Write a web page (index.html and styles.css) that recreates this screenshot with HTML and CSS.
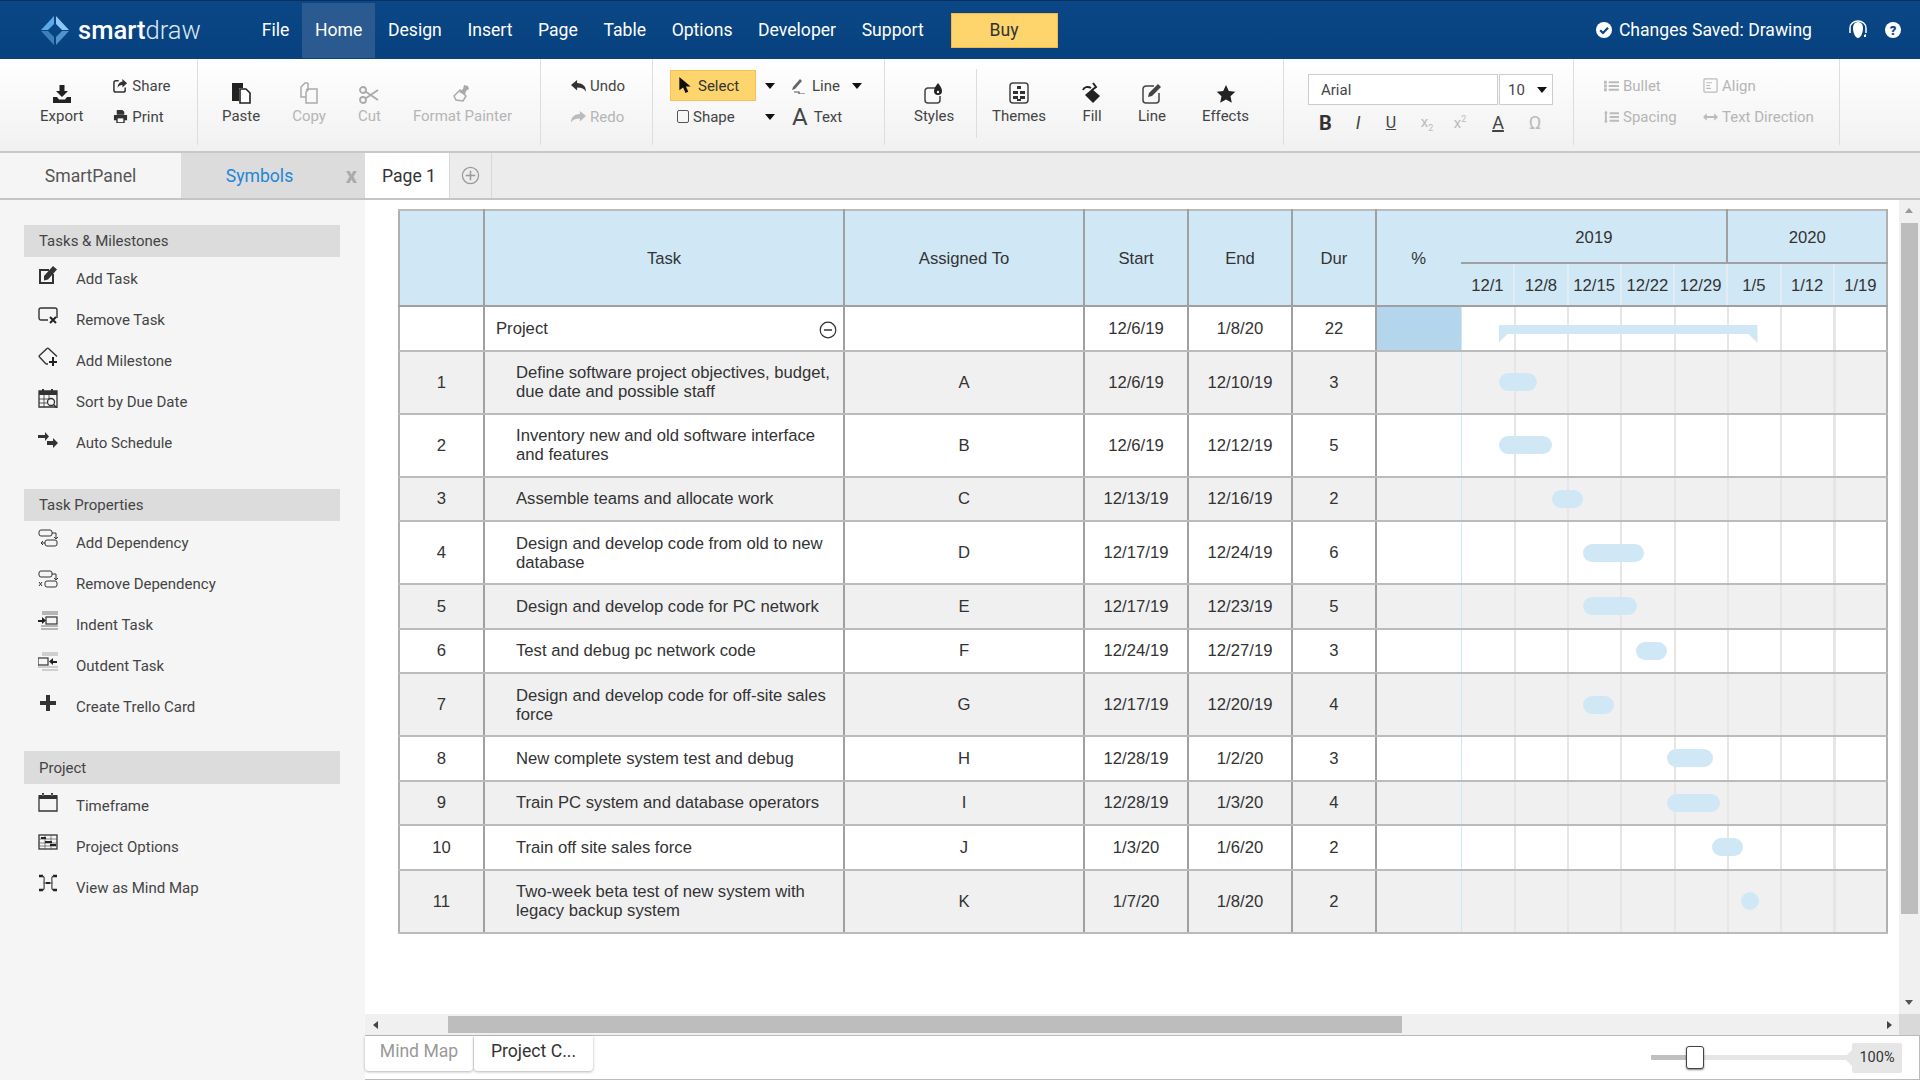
FILE: index.html
```html
<!DOCTYPE html>
<html lang="en">
<head>
  <meta charset="UTF-8">
  <title>SmartDraw - Project Chart</title>
  <link rel="stylesheet" href="styles.css">
</head>
<body>

  <!-- Top menu -->
  <div class="navbar">
    <div class="logo">
      <svg class="logo-mark" viewBox="0 0 28 29" width="28" height="29">
        <path fill="#5aa9ea" d="M0 14 13 0v8l-6 6z"/>
        <path fill="#8cc8f8" d="M28 14 15 0v8l6 6z"/>
        <path fill="#3f7fb8" d="M0 15l13 14v-8l-6-6z"/>
        <path fill="#4f93cc" d="M28 15 15 29v-8l6-6z"/>
      </svg>
      <span class="logo-text"><b>smart</b>draw</span>
    </div>
    <a class="nav-item">File</a>
    <a class="nav-item active">Home</a>
    <a class="nav-item">Design</a>
    <a class="nav-item">Insert</a>
    <a class="nav-item">Page</a>
    <a class="nav-item">Table</a>
    <a class="nav-item">Options</a>
    <a class="nav-item">Developer</a>
    <a class="nav-item">Support</a>
    <a class="buy-btn">Buy</a>
    <div class="nav-right">
      <svg viewBox="0 0 16 16" width="16" height="16"><circle cx="8" cy="8" r="8" fill="#fff"/><path d="M4.200 8.200 7 11l5-5.200" fill="none" stroke="#0a4585" stroke-width="2.200"/></svg>
      <span class="saved-text">Changes Saved: Drawing</span>
      <svg class="headset" viewBox="0 0 20 20" width="20" height="20"><path d="M5 8c0-4 2.500-6 5-6s5 2 5 6c0 5-2.500 10-5 10S5 13 5 8z" fill="#fff"/><path d="M2 13V8c0-4 3.500-7 8-7s8 3 8 7v5" fill="none" stroke="#fff" stroke-width="1.500"/><path d="M16 15l2-1v3h-2z" fill="#fff"/></svg>
      <span class="help">?</span>
    </div>
  </div>

  <!-- Ribbon -->
  <div class="toolbar">
    <div class="tool-group group-file">
      <div class="big-tool">
        <svg viewBox="0 0 20 20" width="20" height="20"><path d="M7.500 1h5v6h3.500L10 13 4 7h3.500z" fill="#222"/><path d="M1 13h4l2 2.500h6L15 13h4v6H1z" fill="#222"/></svg>
        <span>Export</span>
      </div>
      <div class="small-tools">
        <div class="small-tool">
          <svg viewBox="0 0 16 16" width="15" height="15"><path d="M6 3H3a2 2 0 0 0-2 2v8a2 2 0 0 0 2 2h8a2 2 0 0 0 2-2v-3" fill="none" stroke="#333" stroke-width="1.600"/><path d="M10 1l5 4.500-5 4.500V7.500C7.500 7.500 6 8.500 5 10.500c0-4 2-6.500 5-6.500z" fill="#333"/></svg>
          <span>Share</span>
        </div>
        <div class="small-tool">
          <svg viewBox="0 0 16 16" width="15" height="15"><path d="M4 1h6l2 2v3H4zM1 6.500h14V12h-2.500v3h-9v-3H1z" fill="#333"/><path d="M5 10h6v4H5z" fill="#f8f8f8"/></svg>
          <span>Print</span>
        </div>
      </div>
    </div>

    <div class="tool-group group-clipboard">
      <div class="big-tool">
        <svg viewBox="0 0 20 22" width="20" height="22"><path d="M1 1h11v5H8v13H1z" fill="#222"/><path d="M9 7h6l4 4v10H9z" fill="#fff" stroke="#222" stroke-width="1.600"/></svg>
        <span>Paste</span>
      </div>
      <div class="big-tool disabled">
        <svg viewBox="0 0 20 22" width="20" height="22"><path d="M9 1h-3L2 5v10h5" fill="none" stroke="#aaa" stroke-width="1.500"/><path d="M9 1v6L7 8M12 7h-2l-3 3v11h11V7z" fill="none" stroke="#aaa" stroke-width="1.500"/></svg>
        <span>Copy</span>
      </div>
      <div class="big-tool disabled">
        <svg viewBox="0 0 20 18" width="20" height="18"><circle cx="4" cy="4" r="3" fill="none" stroke="#aaa" stroke-width="1.800"/><circle cx="4" cy="14" r="3" fill="none" stroke="#aaa" stroke-width="1.800"/><path d="M6.500 5.500 19 14M6.500 12.500 19 4" stroke="#aaa" stroke-width="1.800"/></svg>
        <span>Cut</span>
      </div>
      <div class="big-tool disabled">
        <svg viewBox="0 0 20 20" width="20" height="20"><path d="M2 12l6-6 6 6-3 5-7-1z" fill="none" stroke="#aaa" stroke-width="1.500"/><path d="M7 8l4-3 1-4 4 1 1 3-3 2-1 4z" fill="#aaa"/></svg>
        <span>Format Painter</span>
      </div>
    </div>

    <div class="tool-group group-history">
      <div class="small-tools">
        <div class="small-tool">
          <svg viewBox="0 0 16 14" width="15" height="14"><path d="M0 6l6.500-5.500v3.300C11 4 16 6 16 13c-1.800-3-4.500-4.300-9.500-4.300v3z" fill="#333"/></svg>
          <span>Undo</span>
        </div>
        <div class="small-tool disabled">
          <svg viewBox="0 0 16 14" width="15" height="14"><path d="M16 6 9.500.5v3.300C5 4 0 6 0 13c1.800-3 4.500-4.300 9.500-4.300v3z" fill="#bbb"/></svg>
          <span>Redo</span>
        </div>
      </div>
    </div>

    <div class="tool-group group-draw">
      <div class="select-btn">
        <svg viewBox="0 0 14 18" width="14" height="17"><path d="M1 0v14l4-3 2.500 6 3-1.300L8 10h5z" fill="#111"/></svg>
        <span>Select</span>
      </div>
      <i class="caret"></i>
      <div class="small-tool draw-line">
        <svg viewBox="0 0 14 16" width="14" height="16"><path d="M1 9l7-8 2 2-7 8-3 1z" fill="#666"/><path d="M2 14h5v2h6" fill="none" stroke="#555" stroke-width="1.200"/></svg>
        <span>Line</span>
        <i class="caret"></i>
      </div>
      <div class="small-tool draw-shape">
        <i class="check-box"></i>
        <span>Shape</span>
      </div>
      <i class="caret"></i>
      <div class="small-tool draw-text">
        <span class="big-a">A</span>
        <span>Text</span>
      </div>
    </div>

    <div class="tool-group group-styles">
      <div class="big-tool">
        <svg viewBox="0 0 20 22" width="20" height="22"><path d="M12 6H4a3 3 0 0 0-3 3v9a3 3 0 0 0 3 3h9a3 3 0 0 0 3-3v-4" fill="none" stroke="#444" stroke-width="1.500"/><path d="M14 1c2 3 4 5 4 8a4 4 0 0 1-8 0c0-3 2-5 4-8z" fill="#222"/><circle cx="14" cy="10" r="1.200" fill="#fff"/></svg>
        <span>Styles</span>
      </div>
    </div>

    <div class="tool-group group-format">
      <div class="big-tool">
        <svg viewBox="0 0 20 22" width="20" height="22"><rect x="1" y="1" width="18" height="20" rx="3" fill="none" stroke="#444" stroke-width="1.500"/><path d="M8 4h4v3H8zM4 9h5v3H4zM11 9h5v3h-5zM4 14h5v3H4zM8 17h4v2H8zM11 14h5v3h-5z" fill="#333"/></svg>
        <span>Themes</span>
      </div>
      <div class="big-tool">
        <svg viewBox="0 0 20 22" width="20" height="22"><path d="M10 7l8 7-7 7-8-8z" fill="#222"/><path d="M1 8c1-3 5-4 8-2M11 1l3 4-4 3" fill="none" stroke="#222" stroke-width="2"/></svg>
        <span>Fill</span>
      </div>
      <div class="big-tool">
        <svg viewBox="0 0 20 22" width="20" height="22"><path d="M12 4H4a3 3 0 0 0-3 3v11a3 3 0 0 0 3 3h10a3 3 0 0 0 3-3v-7" fill="none" stroke="#444" stroke-width="1.500"/><path d="M7 11 16 2l3 3-9 9-4 1z" fill="#444"/></svg>
        <span>Line</span>
      </div>
      <div class="big-tool">
        <svg viewBox="0 0 20 20" width="20" height="20"><path d="M10 1l2.800 6 6.500.8-4.800 4.400 1.300 6.500L10 15.500l-5.800 3.200 1.300-6.500L.7 7.800l6.500-.8z" fill="#222"/></svg>
        <span>Effects</span>
      </div>
    </div>

    <div class="tool-group group-font">
      <div class="font-row">
        <div class="font-box">Arial</div>
        <div class="size-box">10<i class="caret"></i></div>
      </div>
      <div class="format-row">
        <span class="fmt-b">B</span>
        <span class="fmt-i">I</span>
        <span class="fmt-u">U</span>
        <span class="fmt-script">x<sub>2</sub></span>
        <span class="fmt-script">x<sup>2</sup></span>
        <span class="fmt-a">A</span>
        <span class="fmt-o">&#937;</span>
      </div>
    </div>

    <div class="tool-group group-para">
      <div class="small-tool disabled">
        <svg viewBox="0 0 16 14" width="15" height="14"><path d="M5 2h11v2H5zM5 6h11v2H5zM5 10h11v2H5z" fill="#bbb"/><path d="M0 1.500h3v3H0zM0 5.500h3v3H0zM0 9.500h3v3H0z" fill="#bbb"/></svg>
        <span>Bullet</span>
      </div>
      <div class="small-tool disabled">
        <svg viewBox="0 0 16 16" width="15" height="15"><rect x="1" y="1" width="14" height="14" rx="1" fill="none" stroke="#bbb" stroke-width="1.300"/><path d="M3.500 5h6M3.500 8h4M3.500 11h5" stroke="#bbb" stroke-width="1.200"/></svg>
        <span>Align</span>
      </div>
      <div class="small-tool disabled">
        <svg viewBox="0 0 16 14" width="15" height="14"><path d="M6 2h10v2H6zM6 6h10v2H6zM6 10h10v2H6z" fill="#bbb"/><path d="M2 0l2 3H3v8h1l-2 3-2-3h1V3H0z" fill="#bbb"/></svg>
        <span>Spacing</span>
      </div>
      <div class="small-tool disabled">
        <svg viewBox="0 0 16 10" width="15" height="10"><path d="M0 5l4-4v3h8V1l4 4-4 4V6H4v3z" fill="#bbb"/></svg>
        <span>Text Direction</span>
      </div>
    </div>
  </div>

  <!-- Panel tabs and page tabs -->
  <div class="tab-bar">
    <div class="panel-tab">SmartPanel</div>
    <div class="panel-tab selected">Symbols<span class="close-x">x</span></div>
    <div class="page-tab">Page 1</div>
    <div class="page-add">
      <svg viewBox="0 0 20 20" width="19" height="19"><circle cx="10" cy="10" r="8.500" fill="none" stroke="#999" stroke-width="1.300"/><path d="M10 5v10M5 10h10" stroke="#999" stroke-width="1.600"/></svg>
    </div>
  </div>

  <div class="workspace">
    <!-- SmartPanel -->
    <div class="panel">
      <div class="panel-title">Tasks &amp; Milestones</div>
      <ul class="panel-list">
        <li>
          <svg viewBox="0 0 20 20" width="20" height="20"><path d="M1 4h10v2H3v11h11V9h2v10H1z" fill="#333"/><path d="M6 11 15 1l4 3.500-9 10-4 1z" fill="#333"/></svg>
          Add Task
        </li>
        <li>
          <svg viewBox="0 0 20 20" width="20" height="20"><path d="M10 14H3a2 2 0 0 1-2-2V4a2 2 0 0 1 2-2h14a2 2 0 0 1 2 2v8" fill="none" stroke="#333" stroke-width="1.400"/><path d="M12 11l6 6M18 11l-6 6" stroke="#222" stroke-width="2"/></svg>
          Remove Task
        </li>
        <li>
          <svg viewBox="0 0 20 20" width="20" height="20"><path d="M8 17 1.500 10a1 1 0 0 1 0-1.500L9 1.500a1 1 0 0 1 1.500 0L19 9.500" fill="none" stroke="#333" stroke-width="1.400"/><path d="M8 17h2" stroke="#333" stroke-width="1.400"/><path d="M15 10v9M11 15h8" stroke="#222" stroke-width="2"/></svg>
          Add Milestone
        </li>
        <li>
          <svg viewBox="0 0 20 20" width="20" height="20"><path d="M1 3h18v16H1z" fill="none" stroke="#333" stroke-width="1.300"/><path d="M1 3h18v4H1z" fill="#333"/><path d="M5 1v3M14 1v3" stroke="#333" stroke-width="2"/><path d="M1 11h11M1 15h8M6 7v12M11 7v5" stroke="#333" stroke-width=".8"/><circle cx="13" cy="14" r="3.500" fill="#f5f5f5" stroke="#333" stroke-width="1.300"/><path d="M15.500 16.500 19 20" stroke="#333" stroke-width="1.500"/></svg>
          Sort by Due Date
        </li>
        <li>
          <svg viewBox="0 0 20 20" width="20" height="20"><path d="M0 6h7V3l4 4.500L7 12V9H0z" fill="#333"/><path d="M9 12h6V9l5 5-5 5v-3H9z" fill="#333"/></svg>
          Auto Schedule
        </li>
      </ul>

      <div class="panel-title">Task Properties</div>
      <ul class="panel-list">
        <li>
          <svg viewBox="0 0 20 20" width="20" height="20"><rect x="1" y="1" width="13" height="6" rx="2" fill="none" stroke="#333"/><rect x="7" y="11" width="12" height="6" rx="2" fill="none" stroke="#333"/><path d="M14 4h4v6M16 8l2 2 2-2M7 14H3M5 12l-2 2 2 2" fill="none" stroke="#333"/></svg>
          Add Dependency
        </li>
        <li>
          <svg viewBox="0 0 20 20" width="20" height="20"><rect x="1" y="1" width="13" height="6" rx="2" fill="none" stroke="#333"/><rect x="7" y="11" width="12" height="6" rx="2" fill="none" stroke="#333"/><path d="M14 4h4v6M16 8l2 2 2-2M4 12l-3 4M1 12l3 4" fill="none" stroke="#333"/></svg>
          Remove Dependency
        </li>
        <li>
          <svg viewBox="0 0 20 20" width="20" height="20"><path d="M4 1h16M4 3h16M3 15h17M3 18h17" stroke="#777" stroke-width="1.200"/><rect x="8" y="6" width="11" height="7" fill="none" stroke="#333" stroke-width="1.200"/><path d="M0 9h4V6l4 3.500L4 13v-2H0z" fill="#222"/></svg>
          Indent Task
        </li>
        <li>
          <svg viewBox="0 0 20 20" width="20" height="20"><path d="M4 1h16M4 3h16M0 15h20M4 18h16" stroke="#aaa" stroke-width="1.200"/><rect x="0" y="6" width="10" height="7" fill="none" stroke="#333" stroke-width="1.200"/><path d="M19 9h-4V6l-4 3.500 4 3.500v-2h4z" fill="#222"/></svg>
          Outdent Task
        </li>
        <li>
          <svg viewBox="0 0 20 20" width="20" height="20"><path d="M2 8h6V2h4v6h6v4h-6v6H8v-6H2z" fill="#333"/></svg>
          Create Trello Card
        </li>
      </ul>

      <div class="panel-title project">Project</div>
      <ul class="panel-list">
        <li>
          <svg viewBox="0 0 20 20" width="20" height="20"><path d="M1 4h18v15H1z" fill="none" stroke="#333" stroke-width="1.300"/><path d="M1 3h18v4H1z" fill="#333"/><path d="M5 1v4M14 1v4" stroke="#333" stroke-width="2"/><path d="M4.500 3h1M13.500 3h1" stroke="#f5f5f5"/></svg>
          Timeframe
        </li>
        <li>
          <svg viewBox="0 0 20 20" width="20" height="20"><rect x="1" y="2" width="18" height="14" fill="none" stroke="#333" stroke-width="1.300"/><path d="M1 6h18M1 10h18M1 13h18M7 2v14M13 2v14" stroke="#555" stroke-width=".7"/><path d="M3 4h5v2H3zM7 8h7v2H7zM12 11h6v2h-6z" fill="#222"/></svg>
          Project Options
        </li>
        <li>
          <svg viewBox="0 0 20 20" width="20" height="20"><path d="M1 2h4M1 16h4M15 2h4M15 16h4" stroke="#222" stroke-width="2.500"/><path d="M4 2c3 0 2 3 2 7s1 7-2 7M16 2c-3 0-2 3-2 7s-1 7 2 7M6 9h8" fill="none" stroke="#333" stroke-width="1.100"/><path d="M8 8h4v2H8z" fill="#222"/></svg>
          View as Mind Map
        </li>
      </ul>
    </div>

    <div class="stage">
      <div class="stage-top">
        <div class="canvas">
          <table class="gantt">
            <colgroup>
              <col class="col-num"><col class="col-task"><col class="col-who"><col class="col-date"><col class="col-date"><col class="col-dur"><col class="col-pct">
              <col class="col-week"><col class="col-week"><col class="col-week"><col class="col-week"><col class="col-week"><col class="col-week"><col class="col-week"><col class="col-week">
            </colgroup>
            <thead>
              <tr class="year-row">
                <th rowspan="2"></th>
                <th rowspan="2">Task</th>
                <th rowspan="2">Assigned To</th>
                <th rowspan="2">Start</th>
                <th rowspan="2">End</th>
                <th rowspan="2">Dur</th>
                <th rowspan="2" class="pct">%</th>
                <th colspan="5" class="year">2019</th>
                <th colspan="3" class="year-last">2020</th>
              </tr>
              <tr class="week-row">
                <th>12/1</th><th>12/8</th><th>12/15</th><th>12/22</th><th>12/29</th><th>1/5</th><th>1/12</th><th>1/19</th>
              </tr>
            </thead>
            <tbody>
              <tr class="single">
                <td></td><td class="task-head">Project
                  <svg class="collapse" viewBox="0 0 18 18" width="18" height="18"><circle cx="9" cy="9" r="7.800" fill="none" stroke="#333" stroke-width="1.200"/><path d="M5 9h8" stroke="#333" stroke-width="1.500"/></svg>
                </td><td></td><td>12/6/19</td><td>1/8/20</td><td>22</td><td class="pct pct-fill"></td>
                <td colspan="8" class="timeline"><div class="summary-bar"></div></td>
              </tr>
              <tr class="double alt">
                <td>1</td><td class="task">Define software project objectives, budget, due date and possible staff</td><td>A</td><td>12/6/19</td><td>12/10/19</td><td>3</td><td class="pct"></td>
                <td colspan="8" class="timeline"><div class="bar" style="left:38px;width:38px"></div></td>
              </tr>
              <tr class="double">
                <td>2</td><td class="task">Inventory new and old software interface and features</td><td>B</td><td>12/6/19</td><td>12/12/19</td><td>5</td><td class="pct"></td>
                <td colspan="8" class="timeline"><div class="bar" style="left:38px;width:53px"></div></td>
              </tr>
              <tr class="single alt">
                <td>3</td><td class="task">Assemble teams and allocate work</td><td>C</td><td>12/13/19</td><td>12/16/19</td><td>2</td><td class="pct"></td>
                <td colspan="8" class="timeline"><div class="bar" style="left:91px;width:31px"></div></td>
              </tr>
              <tr class="double">
                <td>4</td><td class="task">Design and develop code from old to new database</td><td>D</td><td>12/17/19</td><td>12/24/19</td><td>6</td><td class="pct"></td>
                <td colspan="8" class="timeline"><div class="bar" style="left:122px;width:61px"></div></td>
              </tr>
              <tr class="single alt">
                <td>5</td><td class="task">Design and develop code for PC network</td><td>E</td><td>12/17/19</td><td>12/23/19</td><td>5</td><td class="pct"></td>
                <td colspan="8" class="timeline"><div class="bar" style="left:122px;width:54px"></div></td>
              </tr>
              <tr class="single">
                <td>6</td><td class="task">Test and debug pc network code</td><td>F</td><td>12/24/19</td><td>12/27/19</td><td>3</td><td class="pct"></td>
                <td colspan="8" class="timeline"><div class="bar" style="left:175px;width:31px"></div></td>
              </tr>
              <tr class="double alt">
                <td>7</td><td class="task">Design and develop code for off-site sales force</td><td>G</td><td>12/17/19</td><td>12/20/19</td><td>4</td><td class="pct"></td>
                <td colspan="8" class="timeline"><div class="bar" style="left:122px;width:31px"></div></td>
              </tr>
              <tr class="single">
                <td>8</td><td class="task">New complete system test and debug</td><td>H</td><td>12/28/19</td><td>1/2/20</td><td>3</td><td class="pct"></td>
                <td colspan="8" class="timeline"><div class="bar" style="left:206px;width:46px"></div></td>
              </tr>
              <tr class="single alt">
                <td>9</td><td class="task">Train PC system and database operators</td><td>I</td><td>12/28/19</td><td>1/3/20</td><td>4</td><td class="pct"></td>
                <td colspan="8" class="timeline"><div class="bar" style="left:206px;width:53px"></div></td>
              </tr>
              <tr class="single">
                <td>10</td><td class="task">Train off site sales force</td><td>J</td><td>1/3/20</td><td>1/6/20</td><td>2</td><td class="pct"></td>
                <td colspan="8" class="timeline"><div class="bar" style="left:251px;width:31px"></div></td>
              </tr>
              <tr class="double alt">
                <td>11</td><td class="task">Two-week beta test of new system with legacy backup system</td><td>K</td><td>1/7/20</td><td>1/8/20</td><td>2</td><td class="pct"></td>
                <td colspan="8" class="timeline"><div class="bar" style="left:280px;width:18px"></div></td>
              </tr>
            </tbody>
          </table>
        </div>
        <div class="vscroll">
          <i class="arrow-up"></i>
          <div class="vthumb"></div>
          <i class="arrow-down"></i>
        </div>
      </div>

      <div class="hscroll">
        <div class="hstart"><i class="arrow-left"></i></div>
        <div class="hthumb"></div>
        <div class="hend"><i class="arrow-right"></i></div>
        <div class="corner"></div>
      </div>

      <div class="bottom-bar">
        <div class="sheet-tab muted">Mind Map</div>
        <div class="sheet-tab">Project C...</div>
        <div class="zoom-slider">
          <div class="slider-track"><div class="slider-fill"></div><div class="slider-thumb"></div></div>
          <div class="zoom-value">100%</div>
        </div>
      </div>
    </div>
  </div>

</body>
</html>
```

FILE: styles.css
```css
* {
  box-sizing: border-box;
}

body {
  margin: 0;
  height: 1080px;
  overflow: hidden;
  display: flex;
  flex-direction: column;
  font-family: Roboto, "Noto Sans", sans-serif;
  color: #333;
  background-color: #fff;
}

/* navbar */
.navbar {
  display: flex;
  align-items: center;
  height: 59px;
  flex: none;
  background: linear-gradient(#0b4786, #07417f);
  border-top: 1px solid #0a2f5c;
  color: #fff;
}

.logo {
  display: flex;
  align-items: center;
  width: 249px;
  padding-left: 41px;
}

.logo-text {
  margin-left: 9px;
  font-size: 25.6px;
  font-weight: 300;
  color: #dfe8f1;
}

.logo-text b {
  font-weight: 500;
  color: #fff;
}

.nav-item {
  display: flex;
  align-items: center;
  height: 55px;
  padding: 0 12.8px;
  font-size: 17.6px;
}

.nav-item.active {
  background-color: #2a5a90;
}

.buy-btn {
  display: flex;
  align-items: center;
  justify-content: center;
  width: 107px;
  height: 35px;
  margin-left: 14px;
  background-color: #fdd56c;
  border: 1px solid #f5b942;
  color: #333;
  font-size: 17.6px;
}

.nav-right {
  display: flex;
  align-items: center;
  margin-left: auto;
  padding-right: 19px;
}

.saved-text {
  margin-left: 7px;
  font-size: 17.6px;
}

.headset {
  margin-left: 36px;
}

.help {
  display: flex;
  align-items: center;
  justify-content: center;
  width: 16px;
  height: 16px;
  margin-left: 17px;
  border-radius: 50%;
  background-color: #fff;
  color: #0a4585;
  font-size: 13px;
  font-weight: 900;
}

/* ribbon */
.toolbar {
  display: flex;
  height: 94px;
  flex: none;
  background: linear-gradient(#fff, #f1f1f1);
  border-bottom: 2px solid #c8c8c8;
  font-size: 15px;
}

.tool-group {
  position: relative;
  display: flex;
  height: 86px;
  padding-top: 11px;
  border-right: 1px solid #ddd;
  color: #444;
}

.group-file { width: 198px; padding-left: 40px; gap: 30px; }
.group-clipboard { width: 343px; padding-left: 24px; gap: 32px; }
.group-history { width: 112px; padding-left: 30px; }
.group-draw {
  display: grid;
  grid-template-columns: 86px 36px 85px;
  grid-template-rows: 31px 31px;
  justify-items: start;
  align-items: center;
  width: 232px;
  padding-left: 17px;
}
.group-styles { width: 91px; padding-left: 29px; border-right: none; }
.group-format { width: 308px; padding-left: 16px; gap: 36px; }
.group-format::before {
  content: "";
  position: absolute;
  left: 0;
  top: 10px;
  bottom: 7px;
  width: 1px;
  background-color: #ddd;
}
.group-font { display: block; width: 290px; padding: 15px 0 0 24px; }
.group-para {
  display: grid;
  grid-template-columns: 99px auto;
  grid-template-rows: 31px 31px;
  align-items: center;
  justify-content: start;
  width: 266px;
  padding-left: 30px;
}

.big-tool {
  display: flex;
  flex-direction: column;
  align-items: center;
  justify-content: flex-end;
  height: 59px;
  white-space: nowrap;
}

.big-tool svg {
  margin-bottom: -1px;
}

.big-tool span {
  line-height: 26px;
}

.small-tools {
  display: grid;
  grid-template-rows: 31px 31px;
  align-items: center;
}

.small-tool {
  display: flex;
  align-items: center;
  gap: 4px;
  white-space: nowrap;
}

.disabled {
  color: #b5b5b5;
}

.select-btn {
  display: flex;
  align-items: center;
  gap: 6px;
  width: 86px;
  height: 31px;
  padding-left: 7px;
  background-color: #fdd56c;
  border: 1px solid #f5c25a;
  color: #333;
}

.caret {
  display: inline-block;
  width: 0;
  height: 0;
  margin-left: 9px;
  border-left: 5px solid transparent;
  border-right: 5px solid transparent;
  border-top: 6px solid #111;
}

.draw-line { gap: 6px; }
.draw-line .caret { margin-left: 6px; }
.draw-shape { padding-left: 7px; }
.draw-text { gap: 6px; }

.check-box {
  display: block;
  width: 12px;
  height: 13px;
  border: 1px solid #555;
  border-radius: 2px;
}

.big-a {
  font-size: 24px;
  line-height: 24px;
}

.font-row {
  display: flex;
  gap: 1px;
}

.font-box, .size-box {
  display: flex;
  align-items: center;
  height: 31px;
  background-color: #fff;
  border: 1px solid #ccc;
}

.font-box {
  width: 190px;
  padding-left: 12px;
}

.size-box {
  width: 54px;
  padding-left: 8px;
}

.size-box .caret {
  margin-left: 12px;
}

.format-row {
  display: grid;
  grid-template-columns: 33px 32px 34px 38px 28px 48px 26px;
  align-items: center;
  justify-items: center;
  height: 35px;
  margin-left: 1px;
}

.fmt-b { font-size: 20px; font-weight: 700; color: #333; }
.fmt-i { font-size: 18px; font-style: italic; }
.fmt-u { font-size: 16px; text-decoration: underline; }
.fmt-a { font-size: 18px; text-decoration: underline; text-decoration-thickness: 2px; }
.fmt-o { font-size: 19px; color: #bbb; }
.fmt-script { font-size: 15px; color: #bbb; }
.fmt-script sub, .fmt-script sup { font-size: 9px; }

/* tab row */
.tab-bar {
  display: flex;
  height: 47px;
  flex: none;
  background-color: #ececec;
  border-bottom: 2px solid #c4c4c4;
  font-size: 17.6px;
}

.panel-tab {
  display: flex;
  align-items: center;
  justify-content: center;
  position: relative;
  width: 181px;
  height: 45px;
  background-color: #f5f5f5;
  color: #555;
}

.panel-tab.selected {
  width: 184px;
  padding-right: 27px;
  background-color: #dcdcdc;
  color: #1e86d8;
}

.close-x {
  position: absolute;
  right: 8px;
  top: 10px;
  color: #aaa;
  font-size: 22px;
  font-weight: 700;
}

.page-tab {
  display: flex;
  align-items: center;
  justify-content: center;
  width: 85px;
  padding-left: 4px;
  background-color: #fff;
  border-right: 1px solid #d8d8d8;
}

.page-add {
  display: flex;
  align-items: center;
  justify-content: center;
  width: 42px;
  border-right: 1px solid #d8d8d8;
}

/* main area */
.workspace {
  display: flex;
  flex: 1;
  min-height: 0;
}

.panel {
  width: 365px;
  flex: none;
  padding: 25px 25px 0 24px;
  background-color: #f5f5f5;
  color: #444;
  font-size: 15px;
}

.panel-title {
  display: flex;
  align-items: center;
  height: 32px;
  padding-left: 15px;
  background-color: #dcdcdc;
}

.panel-title.project {
  height: 33px;
}

.panel-list {
  list-style-type: none;
  margin: 1px 0 26px;
  padding: 0;
}

.panel-list + .panel-title + .panel-list {
  margin-bottom: 24px;
}

.panel-list li {
  display: flex;
  align-items: center;
  gap: 18px;
  height: 41px;
  padding-left: 14px;
}

.panel-list svg {
  flex: none;
  margin-top: -8px;
}

.stage {
  display: flex;
  flex-direction: column;
  flex: 1;
  min-width: 0;
}

.stage-top {
  display: flex;
  flex: 1;
  min-height: 0;
}

.canvas {
  flex: 1;
  padding: 9px 0 0 33px;
  background-color: #fff;
}

/* gantt table */
.gantt {
  width: 1488px;
  table-layout: fixed;
  border-collapse: collapse;
  font-family: "Liberation Sans", Arial, sans-serif;
  font-size: 16.67px;
  line-height: 19px;
  color: #333;
}

.col-num { width: 85px; }
.col-task { width: 360px; }
.col-who { width: 240px; }
.col-date { width: 104px; }
.col-dur { width: 84px; }
.col-pct { width: 85px; }
.col-week { width: 53.25px; }

.gantt th {
  padding: 0;
  font-weight: 400;
  background-color: #d0e8f6;
  border: 2px solid #a0a0a0;
}

.year-row { height: 53px; }
.week-row { height: 43px; }
.week-row th { border-left-color: #e2ecf2; border-right-color: #e2ecf2; }
.gantt .year, .gantt .year-last, .gantt .week-row th { padding-top: 2px; }

.gantt td {
  padding: 0;
  text-align: center;
  border: 2px solid #a0a0a0;
  border-bottom-color: #bbb;
  border-top-color: #bbb;
}

/* outer edge of the table is lighter than the column lines */
.gantt .year-row th { border-top-color: #bbb; }
.gantt tr > :first-child { border-left-color: #b0b0b0; }
.gantt tr > :last-child { border-right-color: #b0b0b0; }

/* the line between % and the chart is the pale one */
.gantt .pct { border-right: 1px solid #d0e8f6; }
.gantt .year, .gantt .timeline, .week-row th:first-child { border-left: 1px solid #d0e8f6; }

.single { height: 44.5px; }
.double { height: 63px; }
.alt td { background-color: #f0f0f0; }

.gantt .task, .gantt .task-head {
  position: relative;
  text-align: left;
  padding: 0 6px 0 31px;
}

.gantt .task-head {
  padding-left: 11px;
}

.collapse {
  position: absolute;
  right: 6px;
  top: 14px;
}

.gantt .pct-fill {
  background-color: #b3d6ec;
}

.gantt .timeline {
  position: relative;
  background-image: repeating-linear-gradient(to right, #e6e6e6 0, #e6e6e6 2px, transparent 2px, transparent 53.25px);
  background-position: 52px 0;
  background-repeat: no-repeat;
}

.bar {
  position: absolute;
  top: 50%;
  height: 18px;
  margin: -9px 0 0 -1px;
  border-radius: 9px;
  background-color: #d0e8f6;
}

.summary-bar {
  position: absolute;
  left: 37px;
  top: 18px;
  width: 259px;
  height: 18px;
  background-color: #d0e8f6;
  clip-path: polygon(0 0, 100% 0, 100% 100%, calc(100% - 9px) 50%, 9px 50%, 0 100%);
}

/* scrollbars */
.vscroll {
  position: relative;
  width: 21px;
  flex: none;
  background-color: #f0f0f0;
}

.vthumb {
  position: absolute;
  left: 2px;
  right: 2px;
  top: 23px;
  height: 691px;
  background-color: #bdbdbd;
}

.arrow-up, .arrow-down, .arrow-left, .arrow-right {
  display: block;
  width: 0;
  height: 0;
  position: absolute;
}

.arrow-up {
  left: 6px;
  top: 8px;
  border-left: 4.500px solid transparent;
  border-right: 4.500px solid transparent;
  border-bottom: 5px solid #999;
}

.arrow-down {
  left: 6px;
  bottom: 9px;
  border-left: 4.500px solid transparent;
  border-right: 4.500px solid transparent;
  border-top: 5px solid #555;
}

.hscroll {
  display: flex;
  height: 21px;
  flex: none;
  background-color: #f0f0f0;
}

.hstart, .hend {
  position: relative;
}

.hstart { width: 83px; }
.hend { flex: 1; }

.arrow-left {
  left: 8px;
  top: 7px;
  border-top: 4px solid transparent;
  border-bottom: 4px solid transparent;
  border-right: 5px solid #444;
}

.arrow-right {
  right: 7px;
  top: 7px;
  border-top: 4px solid transparent;
  border-bottom: 4px solid transparent;
  border-left: 5px solid #444;
}

.hthumb {
  width: 954px;
  height: 17px;
  margin-top: 2px;
  background-color: #bdbdbd;
}

.corner {
  width: 21px;
  background-color: #d9d9d9;
}

.bottom-bar {
  display: flex;
  height: 45px;
  flex: none;
  background-color: #fff;
  border-top: 1px solid #bbb;
  border-bottom: 1px solid #bbb;
  border-right: 1px solid #bbb;
  font-size: 17.6px;
}

.sheet-tab {
  display: flex;
  align-items: center;
  justify-content: center;
  width: 108px;
  height: 35px;
  padding-bottom: 5px;
  background-color: #fff;
  border-radius: 0 0 4px 4px;
  box-shadow: 0 1px 3px rgba(0, 0, 0, 0.3);
}

.sheet-tab + .sheet-tab {
  width: 119px;
  margin-left: 1px;
}

.sheet-tab.muted {
  color: #999;
}

.zoom-slider {
  display: flex;
  align-items: center;
  margin-left: auto;
  margin-right: 17px;
}

.slider-track {
  position: relative;
  width: 198px;
  height: 5px;
  background-color: #e6e6e6;
}

.slider-fill {
  width: 35px;
  height: 5px;
  background-color: #c0c0c0;
}

.slider-thumb {
  position: absolute;
  left: 35px;
  top: -9px;
  width: 18px;
  height: 23px;
  background-color: #fff;
  border: 1px solid #444;
  border-radius: 3px;
  box-shadow: 0 1px 2px rgba(0, 0, 0, 0.5);
}

.zoom-value {
  position: relative;
  display: flex;
  align-items: center;
  justify-content: center;
  width: 50px;
  height: 30px;
  margin-left: 3px;
  background-color: #e6e6e6;
  border-radius: 2px;
  font-size: 14.5px;
}

.zoom-value::before {
  content: "";
  position: absolute;
  left: -8px;
  top: 7px;
  border-top: 8px solid transparent;
  border-bottom: 8px solid transparent;
  border-right: 8px solid #e6e6e6;
}
```
